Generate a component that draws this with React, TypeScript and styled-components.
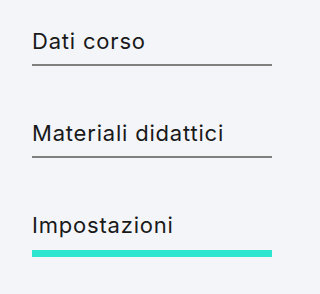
import styled, { createGlobalStyle } from "styled-components";

const GlobalStyle = createGlobalStyle`
    body {
        margin: 0;
        background-color: #f4f5f9;
        font-family: Inter, "Liberation Sans", sans-serif;
    }
`;

const Container = styled.nav`
    width: 240px;
    padding: 26px 0 0 32px;
`;

const MenuList = styled.ul`
    list-style: none;
    margin: 0;
    padding: 0;
    display: flex;
    flex-direction: column;
    gap: 52px;
`;

const MenuItem = styled.li<{ $active?: boolean }>`
    font-size: 22px;
    line-height: 30px;
    letter-spacing: 0.8px;
    color: #19191a;
    padding-bottom: ${(props) => (props.$active ? "10px" : "8px")};
    border-bottom: ${(props) => (props.$active ? "7px solid #2ee5cf" : "2px solid #808080")};
`;

const items = [
    { id: "dati", label: "Dati corso" },
    { id: "materiali", label: "Materiali didattici" },
    { id: "impostazioni", label: "Impostazioni", active: true },
];

function App() {
    return (
        <Container>
            <GlobalStyle />
            <MenuList>
                {items.map((item) => (
                    <MenuItem key={item.id} $active={item.active}>
                        {item.label}
                    </MenuItem>
                ))}
            </MenuList>
        </Container>
    );
}

export default App;
